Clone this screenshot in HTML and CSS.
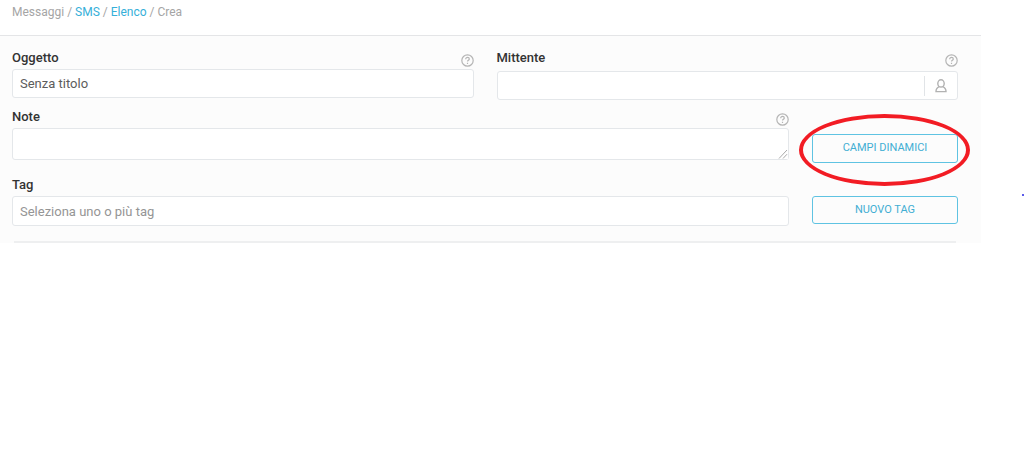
FILE: index.html
```html
<!DOCTYPE html>
<html lang="it">
<head>
  <meta charset="UTF-8" />
  <title>Crea SMS</title>
  <link rel="stylesheet" href="styles.css">
</head>
<body>

  <svg class="symbols" aria-hidden="true">
    <symbol id="help" viewBox="0 0 13 13">
      <circle cx="6.5" cy="6.5" r="5.7" />
      <path d="M4.7 5.2c0-1.2.8-1.8 1.8-1.8s1.8.6 1.8 1.6c0 1.3-1.8 1.3-1.8 2.6M6.5 8.8v1.1" />
    </symbol>
  </svg>

  <div class="page">
    <nav class="breadcrumb">
      Messaggi / <a href="#">SMS</a> / <a href="#">Elenco</a> / Crea
    </nav>

    <form class="form">
      <div class="row row-half">
        <div class="field">
          <div class="field-head">
            <label for="oggetto">Oggetto</label>
            <svg class="help"><use href="#help" /></svg>
          </div>
          <input class="control" type="text" id="oggetto" value="Senza titolo">
        </div>
        <div class="field">
          <div class="field-head">
            <label for="mittente">Mittente</label>
            <svg class="help"><use href="#help" /></svg>
          </div>
          <div class="input-group">
            <input type="text" id="mittente">
            <button type="button" class="btn-user" aria-label="Scegli mittente">
              <svg viewBox="0 0 12 14">
                <ellipse cx="6" cy="4.4" rx="3.2" ry="3.6" />
                <path d="M4.2 7.6C2.2 8.4 1 9.9 1 12.6h10c0-2.7-1.2-4.2-3.2-5" />
              </svg>
            </button>
          </div>
        </div>
      </div>

      <div class="row row-action">
        <div class="field">
          <div class="field-head">
            <label for="note">Note</label>
            <svg class="help"><use href="#help" /></svg>
          </div>
          <div class="textarea-wrap">
            <textarea class="control" id="note"></textarea>
            <svg class="grip" viewBox="0 0 10 10"><path d="M1 9.5L9 1M5 9.5L9 5.2" /></svg>
          </div>
        </div>
        <div class="action highlighted">
          <button type="button" class="btn">CAMPI DINAMICI</button>
        </div>
      </div>

      <div class="row row-action row-tag">
        <div class="field">
          <div class="field-head">
            <label for="tag">Tag</label>
          </div>
          <input class="control control-tag" type="text" id="tag" placeholder="Seleziona uno o più tag">
        </div>
        <div class="action">
          <button type="button" class="btn">NUOVO TAG</button>
        </div>
      </div>

      <hr class="divider">
    </form>
  </div>

  <span class="mark"></span>

</body>
</html>
```
FILE: styles.css
```css
* {
  box-sizing: border-box;
}

body {
  margin: 0;
  position: relative;
  font-family: Roboto, sans-serif;
  font-size: 13px;
  background: #fff;
  color: #333;
}

.symbols {
  display: none;
}

.page {
  margin-right: 43px;
}

.breadcrumb {
  padding: 4px 12px 15px;
  border-bottom: 1px solid #e4e5e7;
  font-size: 12px;
  line-height: 16px;
  color: #a5a5a5;
}

.breadcrumb a {
  color: #36afd9;
  text-decoration: none;
}

.form {
  padding: 13px 23px 0 12px;
  background: #fcfcfc;
}

.row {
  display: grid;
  column-gap: 23px;
  align-items: start;
}

.row-half {
  grid-template-columns: 1fr 1fr;
  margin-bottom: 8px;
}

.row-action {
  grid-template-columns: 1fr 146px;
}

.field-head {
  display: flex;
  justify-content: space-between;
  height: 20px;
}

.field-head label {
  font-weight: 500;
  line-height: 18px;
}

.help {
  width: 13px;
  height: 13px;
  margin-top: 5px;
  fill: none;
  stroke: #b5b5b5;
  stroke-width: 1.2;
}

.control,
.input-group {
  display: block;
  width: 100%;
  height: 29px;
  padding: 0 7px;
  border: 1px solid #e4e7ea;
  border-radius: 3px;
  background: #fff;
  font-family: inherit;
  font-size: 13px;
  color: #5c5c5c;
}

.control::placeholder {
  color: #959595;
}

.textarea-wrap {
  position: relative;
}

textarea.control {
  height: 32px;
  resize: vertical;
}

textarea::-webkit-resizer {
  background: #fff;
}

.grip {
  position: absolute;
  right: 1px;
  bottom: 1px;
  width: 10px;
  height: 10px;
  fill: none;
  stroke: #a8a8a8;
  pointer-events: none;
}

.control-tag {
  height: 30px;
}

.input-group {
  display: flex;
  align-items: center;
  margin-top: 2px;
  padding: 0;
}

.input-group input {
  flex: 1;
  min-width: 0;
  border: none;
  background: none;
}

.btn-user {
  width: 33px;
  height: 20px;
  padding: 0;
  border: none;
  border-left: 1px solid #e1e4e7;
  background: none;
}

.btn-user svg {
  display: block;
  width: 12px;
  height: 14px;
  margin: 0 auto;
  fill: none;
  stroke: #b2b2b2;
  stroke-width: 1.4;
}

.action {
  position: relative;
  margin-top: 20px;
}

.btn {
  display: block;
  width: 100%;
  height: 28px;
  padding: 0 0 2px;
  border: 1px solid #5fc3e2;
  border-radius: 3px;
  background: #fcfcfc;
  font-family: inherit;
  font-size: 11px;
  color: #42aed3;
  cursor: pointer;
}

.highlighted {
  margin-top: 26px;
}

.highlighted .btn {
  height: 29px;
}

.highlighted::after {
  content: "";
  position: absolute;
  inset: -20px -12px -23px -13px;
  border: 4px solid #f21c24;
  border-radius: 50%;
  pointer-events: none;
}

.row-tag {
  margin-top: 13px;
}

.divider {
  height: 2px;
  margin: 15px 2px 0;
  border: none;
  background: #eeeff0;
}

.mark {
  position: absolute;
  top: 194px;
  right: 0;
  width: 2px;
  height: 2px;
  background: #5b5bea;
}
```
